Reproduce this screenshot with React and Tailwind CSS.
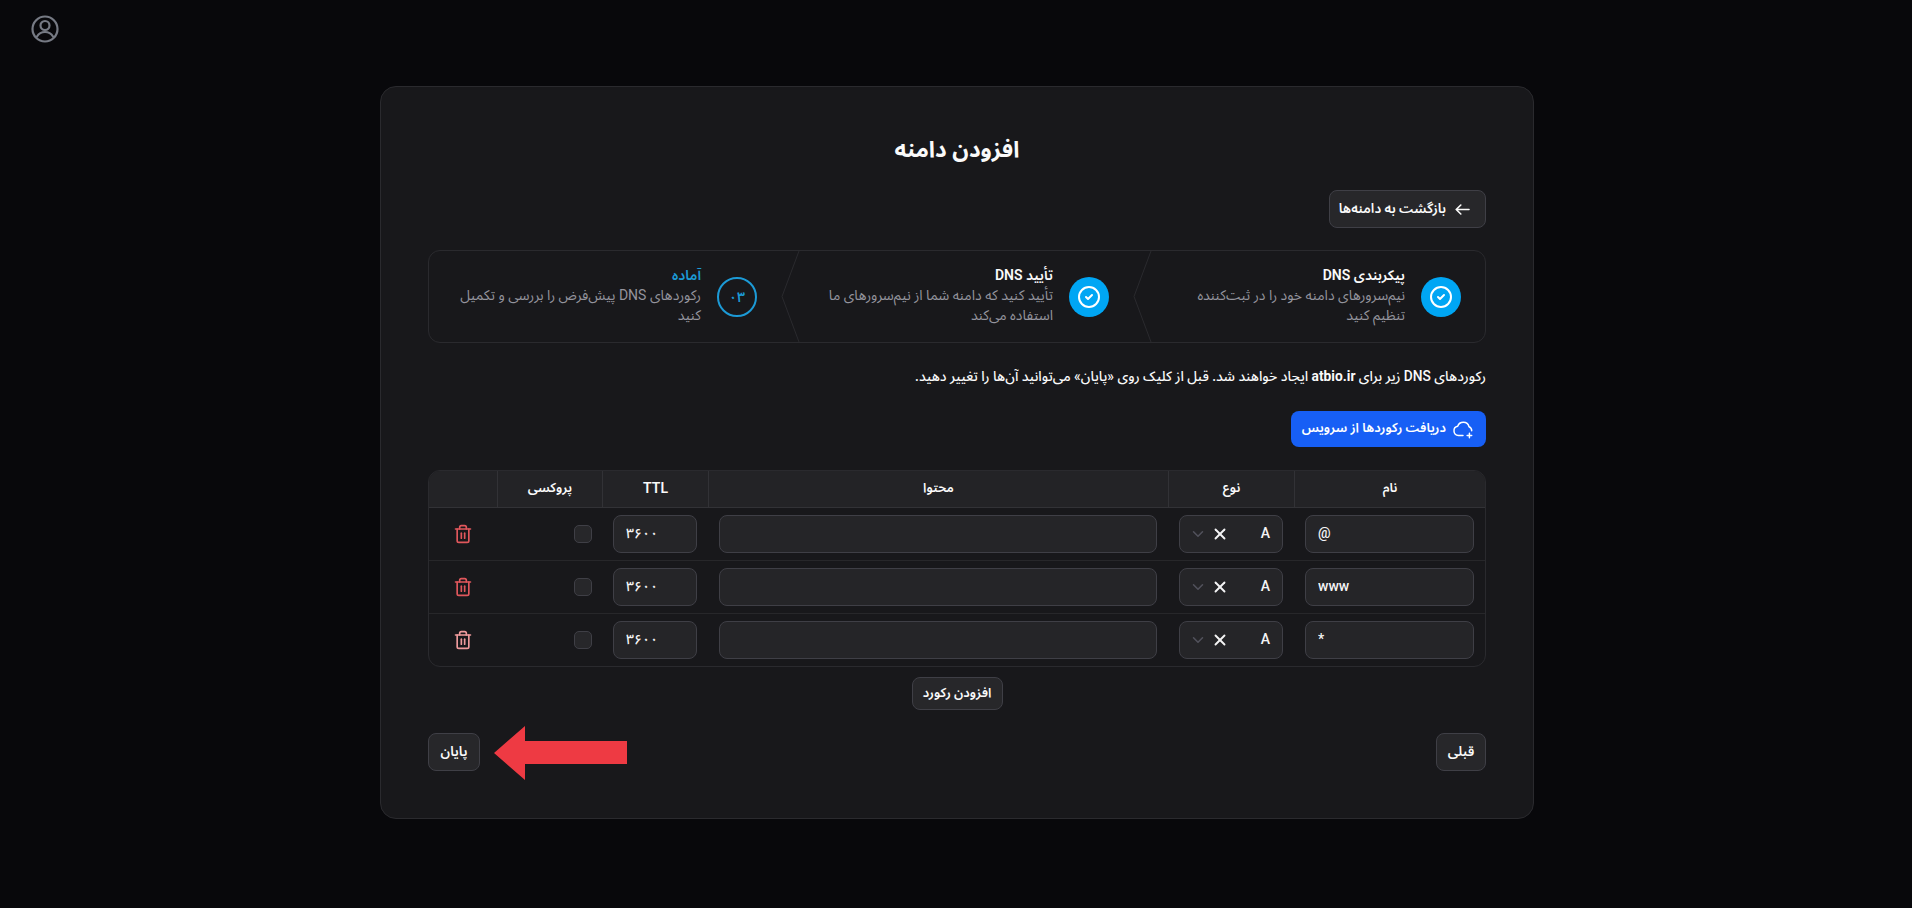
import React from "react";
import { ChevronDown, CircleCheck, Trash2, X } from "lucide-react";

const font = "[font-family:Roboto,'Noto_Sans_Arabic','Noto_Sans',sans-serif]";

function Chevron() {
  return (
    <svg className="absolute top-0 left-[-1px] h-full w-[20px]" viewBox="0 0 20 92" preserveAspectRatio="none" fill="none">
      <path d="M19 0 L2 46 L19 92" stroke="#2a2a2e" strokeWidth="1" />
    </svg>
  );
}

function Step({ done, num, title, desc, active, chevron }) {
  return (
    <div className="relative flex flex-1 items-center gap-4 px-6">
      <div
        className={
          done
            ? "flex h-10 w-10 shrink-0 items-center justify-center rounded-full bg-[#00a6f4] text-white"
            : "flex h-10 w-10 shrink-0 items-center justify-center rounded-full border-2 border-[#1c9ad6] text-sm font-semibold text-[#1c9ad6]"
        }
      >
        {done ? <CircleCheck size={24} strokeWidth={2} /> : num}
      </div>
      <div className="min-w-0 flex-1 pb-[3px] text-sm leading-5">
        <div className={active ? "font-semibold text-[#1c9ad6]" : "font-semibold text-[#fafafa]"}>{title}</div>
        <div className="text-[#94949d]">{desc}</div>
      </div>
      {chevron && <Chevron />}
    </div>
  );
}

function TextInput({ value, className }) {
  return (
    <input
      dir="ltr"
      readOnly
      value={value}
      className={"h-[38px] rounded-lg border border-[#3f3f46] bg-[#252528] px-3 pb-[2px] text-left text-sm font-medium text-[#f4f4f5] outline-none " + className}
    />
  );
}

function Row({ name, trash, last }) {
  return (
    <div className={"grid grid-cols-[191px_126px_460px_106px_105px_69px] items-center " + (last ? "h-[52px]" : "h-[53px] border-b border-[#27272a]")}>
      <div className="px-[11px]"><TextInput value={name} className="w-full" /></div>
      <div className="px-[11px]">
        <div className="flex h-[38px] items-center justify-between rounded-lg border border-[#3f3f46] bg-[#252528] pr-3 pl-[9px] text-sm font-medium text-[#f4f4f5]">
          <span className="pb-[2px]">A</span>
          <span className="flex items-center gap-1">
            <X size={18} strokeWidth={2.5} className="text-[#f4f4f5]" />
            <ChevronDown size={18} strokeWidth={2} className="text-[#52525c]" />
          </span>
        </div>
      </div>
      <div className="px-[11px]"><TextInput value="" className="w-full" /></div>
      <div className="px-[11px]"><TextInput value="۳۶۰۰" className="w-full" /></div>
      <div className="flex justify-start pr-[10px]">
        <span className="block h-[18px] w-[18px] rounded-[5px] border border-[#3f3f46] bg-[#27272a]" />
      </div>
      <div className="flex justify-center">
        <Trash2 size={20} strokeWidth={2} className={trash} />
      </div>
    </div>
  );
}

function Th({ children, last, latin }) {
  return (
    <div className={"flex items-center justify-center pb-[2px] font-semibold text-[#fafafa] " + (latin ? "text-sm " : "text-[13px] ") + (last ? "" : "border-l border-[#323236]")}>
      {children}
    </div>
  );
}

function Btn({ children, className = "" }) {
  return (
    <button className={"flex items-center rounded-lg border border-[#3f3f46] bg-[#27272a] pb-[2px] font-semibold whitespace-nowrap text-[#fafafa] " + className}>
      {children}
    </button>
  );
}

export default function App() {
  return (
    <div className={"h-[908px] overflow-hidden bg-[#08080b] " + font}>
      <div className="flex h-[58px] items-center pl-[31px]">
        <svg width="28" height="28" viewBox="0 0 28 28" fill="none" stroke="#767a84" strokeWidth="2.2">
          <circle cx="14" cy="14" r="12.5" />
          <circle cx="14" cy="10.500" r="4.500" />
          <path d="M6 21.500c1.800-3 4.800-4.500 8-4.500s6.200 1.500 8 4.500" strokeLinecap="round" />
        </svg>
      </div>
      <div className="mt-[28px] flex justify-center pl-[2px]">
        <div dir="rtl" className="h-[733px] w-[1154px] rounded-2xl border border-[#2a2a2e] bg-[#18181b] px-[47px] pt-[46px]">
          <h1 className="text-center text-[22.5px] leading-8 font-bold text-[#fafafa]">افزودن دامنه</h1>
          <div className="mt-[25px] flex">
            <Btn className="h-[38px] w-[157px] gap-[9px] pr-[15px] text-[13.5px]">
              <svg width="15" height="11" viewBox="0 0 15 11" fill="none" stroke="currentColor" strokeWidth="1.6" strokeLinecap="round" strokeLinejoin="round" className="mt-[2px] shrink-0">
                <path d="M14 5.500H1.200M5.800 1L1.200 5.500L5.800 10" />
              </svg>
              <span>بازگشت به دامنه‌ها</span>
            </Btn>
          </div>
          <div className="mt-[22px] flex h-[93px] w-[1058px] rounded-xl border border-[#2a2a2e]">
            <Step done title="پیکربندی DNS" desc={<>نیم‌سرورهای دامنه خود را در ثبت‌کننده<br />تنظیم کنید</>} chevron />
            <Step done title="تأیید DNS" desc="تأیید کنید که دامنه شما از نیم‌سرورهای ما استفاده می‌کند" chevron />
            <Step num="۰۳" active title="آماده" desc="رکوردهای DNS پیش‌فرض را بررسی و تکمیل کنید" />
          </div>
          <p className="mt-[23px] text-[13.75px] leading-5 font-medium text-[#fafafa]">
            رکوردهای DNS زیر برای <span className="font-bold">atbio.ir</span> ایجاد خواهند شد. قبل از کلیک روی «پایان» می‌توانید آن‌ها را تغییر دهید.
          </p>
          <div className="mt-[25px] flex">
            <button className="flex h-[36px] w-[195px] items-center gap-[6px] rounded-lg bg-[#175ff5] pr-[12px] pb-[2px] text-[13px] font-semibold whitespace-nowrap text-white">
              <svg width="22" height="22" viewBox="0 0 24 24" fill="none" stroke="currentColor" strokeWidth="1.6" strokeLinecap="round" strokeLinejoin="round" className="mt-[2px] shrink-0">
                <path d="M12 19H7a5 5 0 0 1-.8-9.900A6.500 6.500 0 0 1 18.600 9.500 4.800 4.800 0 0 1 21.500 14" />
                <path d="M19 16.500v5M16.500 19h5" />
              </svg>
              <span>دریافت رکوردها از سرویس</span>
            </button>
          </div>
          <div className="mt-[23px] w-[1058px] overflow-hidden rounded-xl border border-[#2a2a2e]">
            <div className="grid h-[37px] grid-cols-[191px_126px_460px_106px_105px_69px] border-b border-[#323236] bg-[#232326]">
              <Th>نام</Th>
              <Th>نوع</Th>
              <Th>محتوا</Th>
              <Th latin>TTL</Th>
              <Th>پروکسی</Th>
              <Th last />
            </div>
            <Row name="@" trash="text-[#e0575c]" />
            <Row name="www" trash="text-[#e0575c]" />
            <Row name="*" trash="text-[#ee9a9c]" last />
          </div>
          <div className="mt-[10px] flex justify-center">
            <Btn className="h-[33px] w-[91px] justify-center text-[13px]">افزودن رکورد</Btn>
          </div>
          <div className="relative mt-[23px] flex justify-between">
            <Btn className="h-[38px] w-[50px] justify-center text-[13.5px]">قبلی</Btn>
            <Btn className="h-[38px] w-[52px] justify-center text-[13.5px]">پایان</Btn>
            <svg className="absolute top-[-7px] left-[66px]" width="133" height="54" viewBox="0 0 133 54">
              <path d="M0 27 L31 0 L31 15 L133 15 L133 38 L31 38 L31 54 Z" fill="#ee3a43" />
            </svg>
          </div>
        </div>
      </div>
    </div>
  );
}
